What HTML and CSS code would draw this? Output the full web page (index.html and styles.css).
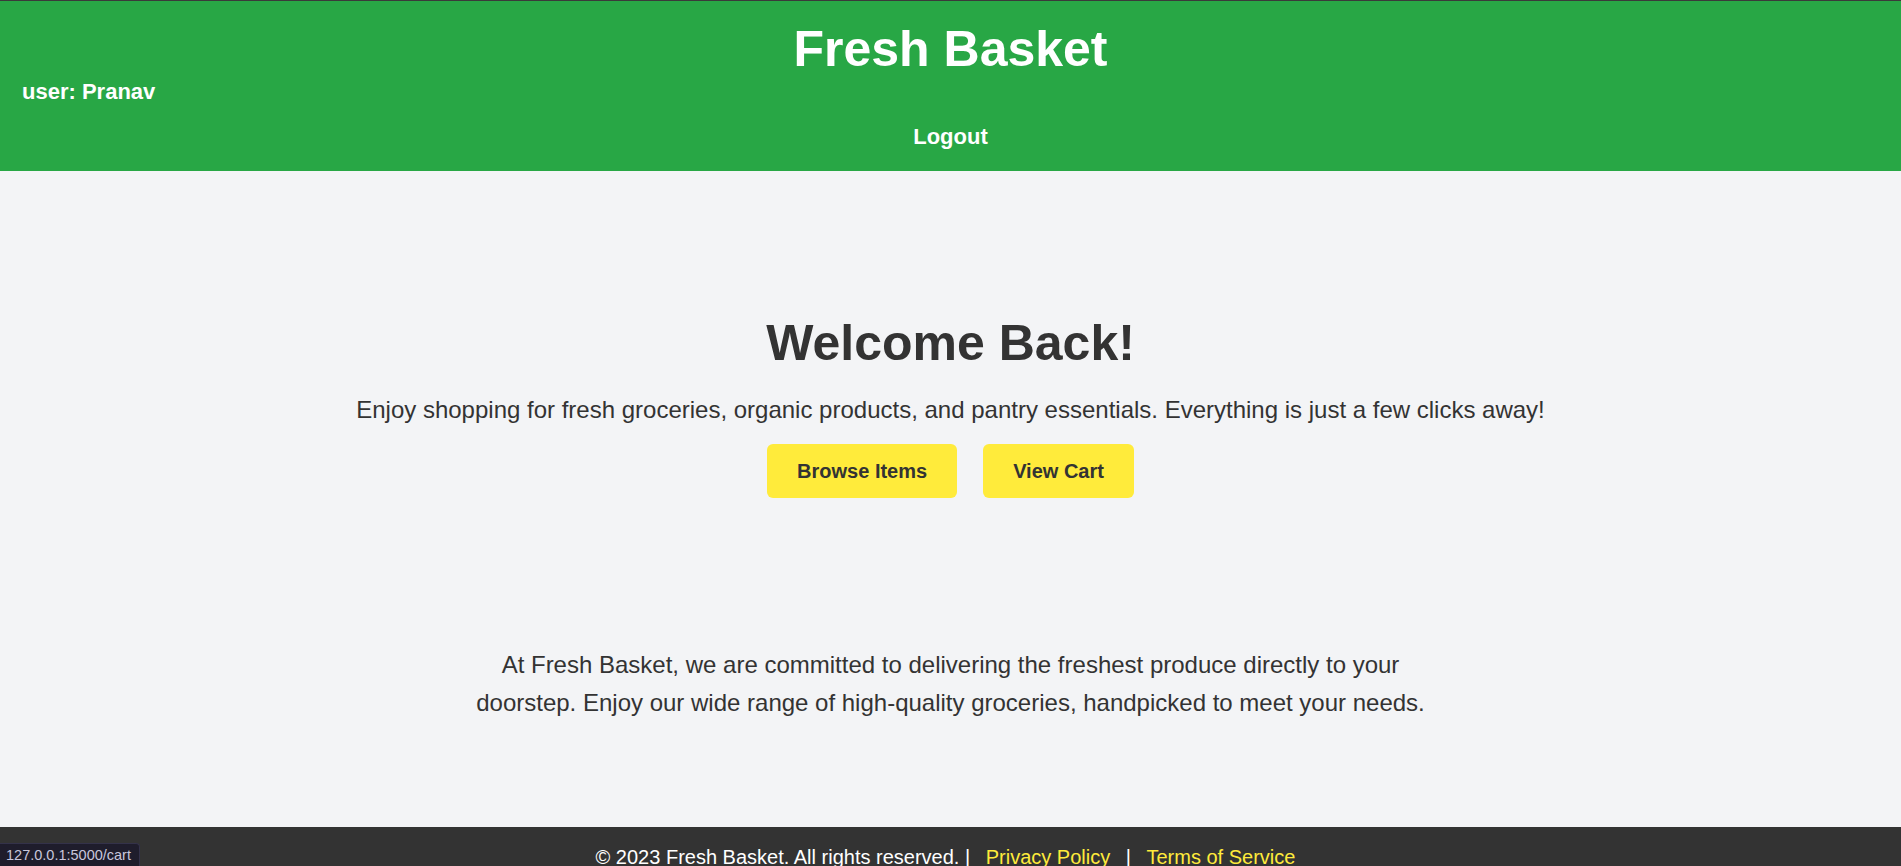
FILE: index.html
```
<!DOCTYPE html>
<html lang="en">
<head>
<meta charset="utf-8">
<title>Fresh Basket</title>
<link rel="stylesheet" href="styles.css">
</head>
<body>
<header class="site-header">
  <h1 class="brand">Fresh Basket</h1>
  <div class="user">user: Pranav</div>
  <nav class="nav"><a href="#" class="nav-link">Logout</a></nav>
</header>
<main class="main">
  <section class="hero">
    <h2 class="hero-title">Welcome Back!</h2>
    <p class="hero-text">Enjoy shopping for fresh groceries, organic products, and pantry essentials. Everything is just a few clicks away!</p>
    <div class="actions">
      <a href="#" class="btn">Browse Items</a>
      <a href="#" class="btn">View Cart</a>
    </div>
  </section>
  <section class="about">
    <p class="about-text">At Fresh Basket, we are committed to delivering the freshest produce directly to your doorstep. Enjoy our wide range of high-quality groceries, handpicked to meet your needs.</p>
  </section>
</main>
<footer class="site-footer">
  <p class="footer-text">&copy; 2023 Fresh Basket. All rights reserved. | <a href="#" class="footer-link">Privacy Policy</a> | <a href="#" class="footer-link">Terms of Service</a></p>
</footer>
<div class="status-url">127.0.0.1:5000/cart</div>
</body>
</html>
```
FILE: styles.css
```
* { box-sizing: border-box; }
html, body { margin: 0; padding: 0; }
body {
  font-family: "Liberation Sans", Arial, sans-serif;
  background: #f3f4f6;
  color: #333;
  font-size: 20px;
}
a { text-decoration: none; }

.site-header {
  background: #28a745;
  border-top: 1px solid #3a3a3a;
  color: #fff;
  padding: 18px 0 21px;
}
.brand {
  margin: 0;
  font-size: 50px;
  line-height: 60px;
  font-weight: bold;
  text-align: center;
}
.user {
  font-size: 22px;
  line-height: 26px;
  font-weight: bold;
  padding-left: 22px;
}
.nav {
  margin-top: 19px;
  text-align: center;
}
.nav-link {
  color: #fff;
  font-size: 22px;
  line-height: 26px;
  font-weight: bold;
}

.hero {
  padding: 142px 20px 0;
  text-align: center;
}
.hero-title {
  margin: 0 0 23px;
  font-size: 50px;
  line-height: 60px;
  font-weight: bold;
  color: #333;
}
.hero-text {
  margin: 0 0 20px;
  font-size: 24px;
  line-height: 28px;
}
.actions {
  display: flex;
  justify-content: center;
  gap: 26px;
}
.btn {
  display: block;
  background: #ffeb3b;
  color: #333;
  font-size: 20px;
  line-height: 24px;
  font-weight: bold;
  padding: 15px 30px;
  border-radius: 6px;
}

.about {
  padding: 148px 20px 104px;
}
.about-text {
  max-width: 1000px;
  margin: 0 auto;
  text-align: center;
  font-size: 24px;
  line-height: 38.4px;
}

.site-footer {
  background: #333;
  color: #fff;
  padding: 19px 0 18px;
  text-align: center;
}
.footer-text {
  margin: 0;
  font-size: 20px;
  line-height: 23px;
}
.footer-link {
  color: #ffeb3b;
  margin: 0 10px;
}

.status-url {
  position: fixed;
  left: 0;
  bottom: 0;
  width: 140px;
  height: 23px;
  background: #1f1d2c;
  border: 1px solid #34324a;
  border-left: none;
  border-bottom: none;
  border-top-right-radius: 4px;
  color: #c9c7dc;
  font-family: "Liberation Sans", Arial, sans-serif;
  font-size: 14.5px;
  line-height: 22px;
  padding-left: 6px;
  white-space: nowrap;
}
```
